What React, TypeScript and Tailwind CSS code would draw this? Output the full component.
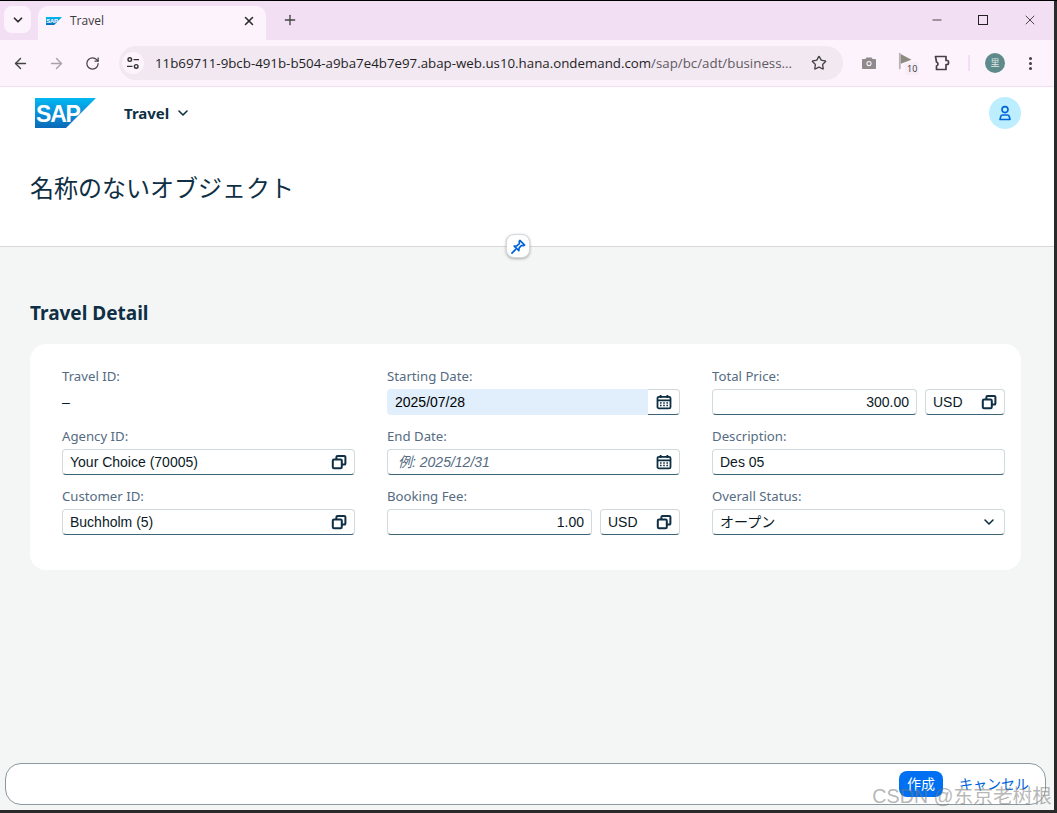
import { ArrowLeft, ArrowRight, ChevronDown, Minus, MoreVertical, Plus, RotateCw, Star, X } from "lucide-react";

const uiFont = "font-['Noto_Sans','Noto_Sans_CJK_JP',sans-serif]";
const valueFont = "font-['Liberation_Sans','Noto_Sans_CJK_JP',sans-serif]";

function SapLogo({ className, id }: { className: string; id: string }) {
    return (
        <svg viewBox="0 0 61 30" className={className}>
            <defs>
                <linearGradient id={id} x1="0" y1="0" x2="0" y2="1">
                    <stop offset="0" stopColor="#00b8f1" />
                    <stop offset="0.5" stopColor="#0a8fd8" />
                    <stop offset="1" stopColor="#0a6ab8" />
                </linearGradient>
            </defs>
            <polygon points="0,0 61,0 31,30 0,30" fill={`url(#${id})`} />
            <text x="1" y="23.5" fill="#fff" fontSize="23" fontWeight="700" fontFamily="Liberation Sans" letterSpacing="-1.2">
                SAP
            </text>
        </svg>
    );
}

function ValueHelpIcon() {
    return (
        <svg viewBox="0 0 16 16" className="h-4 w-4 text-[#0e2f44]" fill="none" stroke="currentColor" strokeWidth="2">
            <rect x="1.800" y="5.600" width="9" height="8.600" rx="1.200" />
            <path d="M5.400 5.400V3.100c0-.7.500-1.200 1.200-1.200h6.600c.7 0 1.200.5 1.200 1.200v6.300c0 .7-.5 1.200-1.200 1.200h-2.300" />
        </svg>
    );
}

function CalendarIcon() {
    return (
        <svg viewBox="0 0 16 16" className="h-4 w-4 text-[#0e2f44]" fill="none" stroke="currentColor" strokeWidth="1.800">
            <rect x="1.500" y="2.800" width="13" height="11.600" rx="1.500" />
            <path d="M1.500 6.400h13M4.600 1v3M11.400 1v3" />
            <path d="M4 9h1.600M7.200 9h1.600M10.400 9H12M4 11.600h1.600M7.200 11.600h1.600M10.400 11.600H12" strokeWidth="1.500" />
        </svg>
    );
}

function Label({ text }: { text: string }) {
    return <div className="h-5 text-[13.2px] leading-5 text-[#556b82]">{text}</div>;
}

function Field({ value, right, icon, muted, className }: { value: string; right?: boolean; icon?: React.ReactNode; muted?: boolean; className?: string }) {
    return (
        <div className={`flex h-[26px] items-center rounded-[4px] border border-[#d0d9dc] border-b-[#3c6378] bg-white px-[7px] text-[14px] ${valueFont} ${className ?? ""}`}>
            <span className={`flex-1 whitespace-nowrap ${right ? "text-right" : ""} ${muted ? "italic text-[#556b82]" : "text-[#0a1a26]"}`}>{value}</span>
            {icon}
        </div>
    );
}

function AmountField({ value }: { value: string }) {
    return (
        <div className="flex gap-2">
            <Field value={value} right className="flex-1" />
            <Field value="USD" icon={<ValueHelpIcon />} className="w-[80px]" />
        </div>
    );
}

function Cell({ label, children }: { label: string; children: React.ReactNode }) {
    return (
        <div className="flex flex-col gap-[3px]">
            <Label text={label} />
            {children}
        </div>
    );
}

function BrowserChrome() {
    return (
        <div className="shrink-0 font-['Open_Sans','Noto_Sans_CJK_JP',sans-serif]">
            <div className="flex h-[39px] items-end bg-[#f3dff3] pl-1">
                <div className="mb-[7px] flex h-[27px] w-[27px] items-center justify-center rounded-lg bg-[#fdf3fd]">
                    <ChevronDown size={14} strokeWidth={3} className="text-[#2b2b2b]" />
                </div>
                <div className="ml-[7px] flex h-[34px] w-[228px] items-center rounded-t-[10px] bg-[#fdf3fd] pb-1 pl-2 pr-[10px]">
                    <SapLogo id="tabLogo" className="h-2 w-4" />
                    <span className="ml-2 flex-1 text-[12px] text-[#3a3a3a]">Travel</span>
                    <X size={14} strokeWidth={2.6} className="text-[#2b2b2b]" />
                </div>
                <Plus size={16} strokeWidth={2} className="mb-[12px] ml-4 text-[#444]" />
                <div className="flex-1" />
                <div className="mb-[12px] flex items-center text-[#222]">
                    <Minus size={14} strokeWidth={1.4} />
                    <div className="ml-[34px] h-[10px] w-[10px] border border-[#222]" />
                    <X size={16} strokeWidth={1.2} className="ml-[34px] mr-[16px]" />
                </div>
            </div>
            <div className="flex h-[47px] items-center border-b border-[#f0dff0] bg-[#fdf3fd]">
                <ArrowLeft size={17} strokeWidth={2} className="ml-3 text-[#444]" />
                <ArrowRight size={17} strokeWidth={2} className="ml-[19px] text-[#a9a3a9]" />
                <RotateCw size={15} strokeWidth={2} className="ml-[20px] text-[#444]" />
                <div className="ml-[19px] flex h-[34px] w-[724px] items-center rounded-full bg-[#f2e8f2] pl-[3px] pr-4">
                    <div className="flex h-[22px] w-[22px] items-center justify-center rounded-full bg-[#fdf3fd]">
                        <svg viewBox="0 0 14 14" className="h-[14px] w-[14px] text-[#333]" fill="none" stroke="currentColor" strokeWidth="1.400">
                            <circle cx="3.800" cy="3.600" r="1.800" />
                            <path d="M7.500 3.600H13M1 10.400h5.500" />
                            <circle cx="10.200" cy="10.400" r="1.800" />
                        </svg>
                    </div>
                    <span className="ml-[11px] flex-1 whitespace-nowrap pt-[2px] text-[13.3px] text-[#1f1f1f]">
                        11b69711-9bcb-491b-b504-a9ba7e4b7e97.abap-web.us10.hana.ondemand.com
                        <span className="text-[#5f5a5f]">/sap/bc/adt/business...</span>
                    </span>
                    <Star size={16} strokeWidth={2} className="text-[#444]" />
                </div>
                <svg viewBox="0 0 16 16" className="ml-[18px] h-4 w-4 text-[#8f8b8b]" fill="currentColor">
                    <path d="M5.400 2.400h5.200l1 1.600H14c.6 0 1 .4 1 1v8c0 .6-.4 1-1 1H2c-.6 0-1-.4-1-1V5c0-.6.400-1 1-1h2.400z" />
                    <circle cx="8" cy="8.600" r="2.600" fill="#fdf3fd" />
                    <circle cx="8" cy="8.600" r="1.500" />
                </svg>
                <div className="relative ml-[21px] h-5 w-5">
                    <svg viewBox="0 0 20 20" className="h-[18px] w-[18px]">
                        <path d="M1 0h2v18H1z" fill="#b8b4b8" />
                        <path d="M3 1l12 6.500L3 12z" fill="#8d8b80" />
                    </svg>
                    <span className="absolute left-[7px] top-[9px] rounded-[3px] bg-[#f8ecf8] px-[2px] text-[9px] leading-[13px] text-[#333]">10</span>
                </div>
                <svg viewBox="0 0 18 18" className="ml-[15px] h-[18px] w-[18px] text-[#463f46]" fill="none" stroke="currentColor" strokeWidth="1.700" strokeLinejoin="round">
                    <path d="M2.500 2.500H13v4h1.200c1.800 0 1.800 4 0 4H13v5H3.500V12c2-.5 2-3.500 0-4z" />
                </svg>
                <div className="ml-[17px] h-[16px] w-[2px] bg-[#f3dff3]" />
                <div className="ml-[15px] flex h-5 w-5 items-center justify-center rounded-full bg-[#5f8a8b] text-[9px] text-[#dfe9e9]">里</div>
                <MoreVertical size={17} strokeWidth={2.4} className="ml-[17px] text-[#444]" />
            </div>
        </div>
    );
}

export default function App() {
    return (
        <div className={`flex h-[813px] w-[1057px] flex-col overflow-hidden border-t border-black bg-[#2a2a2a] ${uiFont}`}>
            <div className="flex h-[809px] w-[1054px] shrink-0 flex-col bg-[#f4f6f6]">
                <BrowserChrome />

                <header className="relative h-[160px] shrink-0 border-b border-[#d9d9d6] bg-white">
                    <div className="flex h-[52px] items-center pl-[35px] pr-[33px]">
                        <SapLogo id="headerLogo" className="h-[30px] w-[61px]" />
                        <span className="ml-7 text-[15px] font-bold text-[#0e2f44]">Travel</span>
                        <ChevronDown size={16} strokeWidth={2.400} className="ml-[6px] text-[#0e2f44]" />
                        <div className="flex-1" />
                        <div className="flex h-8 w-8 items-center justify-center rounded-full bg-[#bdeeff]">
                            <svg viewBox="0 0 16 16" className="h-4 w-4 text-[#0064d9]" fill="none" stroke="currentColor" strokeWidth="1.600">
                                <circle cx="8" cy="4.600" r="3" />
                                <path d="M3 14.500h10l-.8-3.200c-.2-.8-.9-1.300-1.700-1.300h-5c-.8 0-1.500.5-1.700 1.300z" strokeLinejoin="round" />
                            </svg>
                        </div>
                    </div>
                    <h1 className="mt-[33px] pl-[30px] text-[24px] leading-8 text-[#0e2f44]">名称のないオブジェクト</h1>
                    <button className="absolute -bottom-3 left-[506px] flex h-6 w-6 items-center justify-center rounded-lg border border-[#d5d9da] bg-white shadow-[0_1px_3px_rgba(0,0,0,0.3)]">
                        <svg viewBox="0 0 16 16" className="h-[15px] w-[15px] text-[#0064d9]" fill="none" stroke="currentColor" strokeWidth="1.800" strokeLinejoin="round">
                            <path d="M9.500 1.500l5 5-1.200.6-2.300-.1-2.400 2.700-.2 2.800-5-5 2.800-.2L8.900 5l-.1-2.300z" />
                            <path d="M5 11l-4 4" strokeLinecap="round" />
                        </svg>
                    </button>
                </header>

                <main className="flex-1 px-[30px] pt-[50px]">
                    <h2 className="h-[32px] text-[19px] font-bold leading-8 text-[#0e2f44]">Travel Detail</h2>
                    <div className="mt-[15px] grid w-[991px] grid-cols-3 gap-x-8 gap-y-[11px] rounded-2xl bg-white pb-[35px] pl-8 pr-4 pt-[22px]">
                        <Cell label="Travel ID:">
                            <div className={`flex h-[26px] items-center text-[14px] text-[#0a1a26] ${valueFont}`}>–</div>
                        </Cell>
                        <Cell label="Starting Date:">
                            <div className="flex h-[26px] rounded-[4px]">
                                <div className={`flex flex-1 items-center rounded-l-[4px] bg-[#e1eefc] px-2 text-[14px] text-black ${valueFont}`}>2025/07/28</div>
                                <div className="flex w-8 items-center justify-center rounded-r-[4px] border border-l-0 border-[#d0d9dc] border-b-[#3c6378] bg-white">
                                    <CalendarIcon />
                                </div>
                            </div>
                        </Cell>
                        <Cell label="Total Price:">
                            <AmountField value="300.00" />
                        </Cell>
                        <Cell label="Agency ID:">
                            <Field value="Your Choice (70005)" icon={<ValueHelpIcon />} />
                        </Cell>
                        <Cell label="End Date:">
                            <Field value="例: 2025/12/31" muted icon={<CalendarIcon />} className="pl-[10px]" />
                        </Cell>
                        <Cell label="Description:">
                            <Field value="Des 05" />
                        </Cell>
                        <Cell label="Customer ID:">
                            <Field value="Buchholm (5)" icon={<ValueHelpIcon />} />
                        </Cell>
                        <Cell label="Booking Fee:">
                            <AmountField value="1.00" />
                        </Cell>
                        <Cell label="Overall Status:">
                            <Field value="オープン" icon={<ChevronDown size={16} strokeWidth={2.400} className="text-[#0e2f44]" />} />
                        </Cell>
                    </div>
                </main>

                <div className="relative mx-[5px] mb-[5px] flex h-[42px] w-[1041px] items-center justify-end rounded-2xl border border-[#8a9aa0] bg-white pr-4">
                    <button className="flex h-[26px] w-[44px] items-center justify-center rounded-lg bg-[#0070f2] pb-[2px] text-[14px] text-white">作成</button>
                    <span className="ml-4 pb-[2px] text-[14px] text-[#0064d9]">キャンセル</span>
                    <span className="absolute -right-[7px] top-[20px] whitespace-nowrap font-['Liberation_Sans','Noto_Sans_CJK_SC',sans-serif] text-[19.700px] leading-6 text-[rgba(120,120,120,0.55)]">
                        CSDN @东京老树根
                    </span>
                </div>
            </div>
        </div>
    );
}
